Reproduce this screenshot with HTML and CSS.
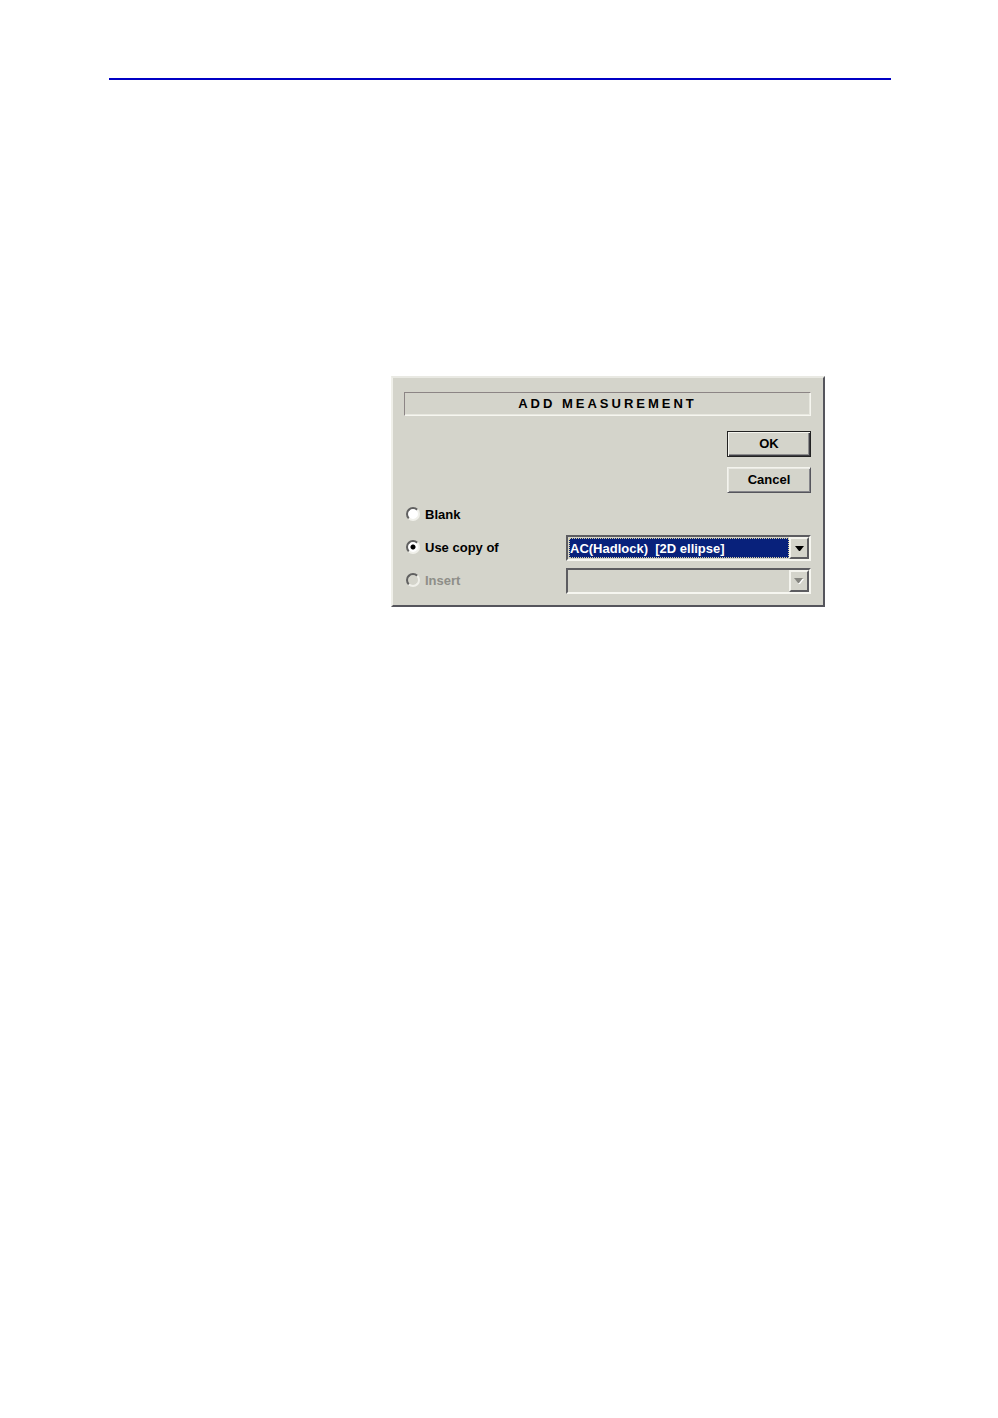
FILE: index.html
```html
<!DOCTYPE html>
<html lang="en">
<head>
    <meta charset="UTF-8">
    <meta name="viewport" content="width=device-width, initial-scale=1.0">
    <title>Add Measurement</title>
    <link rel="stylesheet" href="styles.css">
</head>
<body>
    <div class="page">
        <hr class="page-rule">

        <form class="dialog">
            <h1 class="dialog-title">ADD MEASUREMENT</h1>

            <div class="actions">
                <button type="button" class="btn btn-default">OK</button>
                <button type="button" class="btn">Cancel</button>
            </div>

            <div class="options">
                <div class="row">
                    <label class="choice"><input type="radio" name="source" value="blank">Blank</label>
                </div>
                <div class="row">
                    <label class="choice"><input type="radio" name="source" value="copy" checked>Use copy of</label>
                    <div class="combo">
                        <select aria-label="Use copy of">
                            <option>AC(Hadlock)&nbsp; [2D ellipse]</option>
                        </select>
                        <span class="arrow"><svg width="9" height="5" viewBox="0 0 9 5"><path d="M0 0h9L5 5H4z" fill="#000"/></svg></span>
                    </div>
                </div>
                <div class="row">
                    <label class="choice disabled"><input type="radio" name="source" value="insert" disabled>Insert</label>
                    <div class="combo disabled">
                        <select aria-label="Insert" disabled>
                            <option></option>
                        </select>
                        <span class="arrow"><svg width="10" height="6" viewBox="0 0 10 6"><path d="M1 1h9L6 6H5z" fill="#fff"/><path d="M0 0h9L5 5H4z" fill="#85857f"/></svg></span>
                    </div>
                </div>
            </div>
        </form>
    </div>
</body>
</html>
```
FILE: styles.css
```css
body {
    margin: 0;
    background: #fff;
    color: #000;
    font-family: "Liberation Sans", Arial, sans-serif;
}

.page {
    padding: 78px 107px 78px 109px;
}

.page-rule {
    height: 2px;
    margin: 0;
    border: none;
    background: #0000c4;
}

.dialog {
    box-sizing: border-box;
    max-width: 434px;
    margin: 296px 66px 0 auto;
    padding: 14px 12px 11px 11px;
    background: #d4d4cb;
    border: 2px solid;
    border-color: #e9e9e3 #55555c #55555c #f0f0ea;
    font-size: 13px;
    font-weight: bold;
}

.dialog-title {
    margin: 0 0 15px;
    border: 1px solid;
    border-color: #8c8585 #f6f6f0 #f6f6f0 #8c8585;
    box-shadow: inset -1px -1px #e8e8e0;
    font-size: 13px;
    line-height: 22px;
    letter-spacing: 3px;
    text-align: center;
}

.actions {
    display: flex;
    flex-direction: column;
    align-items: flex-end;
    gap: 10px;
    margin-bottom: 9px;
}

.btn {
    width: 84px;
    height: 26px;
    padding: 0 0 2px;
    background: #d4d4cb;
    border: 1px solid;
    border-color: #f4f4ee #55555c #55555c #f4f4ee;
    box-shadow: inset 1px 1px #e9e9e3, inset -1px -1px #85858a;
    font: inherit;
    color: #000;
}

.btn-default {
    border-color: #222;
    box-shadow: inset 1px 1px #f4f4ee, inset -1px -1px #3c3c42, inset -2px -2px #8c8c8c;
}

.options {
    display: flex;
    flex-direction: column;
    gap: 7px;
}

.row {
    display: flex;
    align-items: center;
    height: 26px;
}

.choice {
    display: flex;
    align-items: center;
    gap: 5px;
    width: 162px;
    padding-bottom: 2px;
}

.choice.disabled {
    color: #8e8e88;
}

.choice input {
    appearance: none;
    width: 14px;
    height: 14px;
    margin: 0 0 0 2px;
    border: 2px solid;
    border-color: #606060 #f0f0ea #f0f0ea #606060;
    border-radius: 50%;
    background: #fff;
}

.choice input:checked {
    background: radial-gradient(circle, #000 2px, #fff 3px);
}

.choice input:disabled {
    background: #d4d4cb;
}

/* sunken drop-down with its own arrow button */
.combo {
    position: relative;
    box-sizing: border-box;
    flex: 1;
    height: 26px;
    padding: 1px;
    border: 2px solid;
    border-color: #5c5c60 #f6f6f0 #f6f6f0 #5c5c60;
}

.combo select {
    appearance: none;
    display: block;
    width: calc(100% - 19px);
    height: 20px;
    padding: 0 0 0 1px;
    border: none;
    border-radius: 0;
    outline: 1px dotted #d8d0a0;
    outline-offset: -1px;
    background: #08217b;
    color: #fff;
    font: inherit;
}

.combo.disabled select {
    outline: none;
    background: #d4d4cb;
}

.arrow {
    position: absolute;
    top: 0;
    right: 0;
    bottom: 0;
    display: flex;
    align-items: center;
    justify-content: center;
    width: 16px;
    background: #d4d4cb;
    border: 2px solid;
    border-color: #f4f4ee #5c5c60 #5c5c60 #f4f4ee;
    pointer-events: none;
}
```
